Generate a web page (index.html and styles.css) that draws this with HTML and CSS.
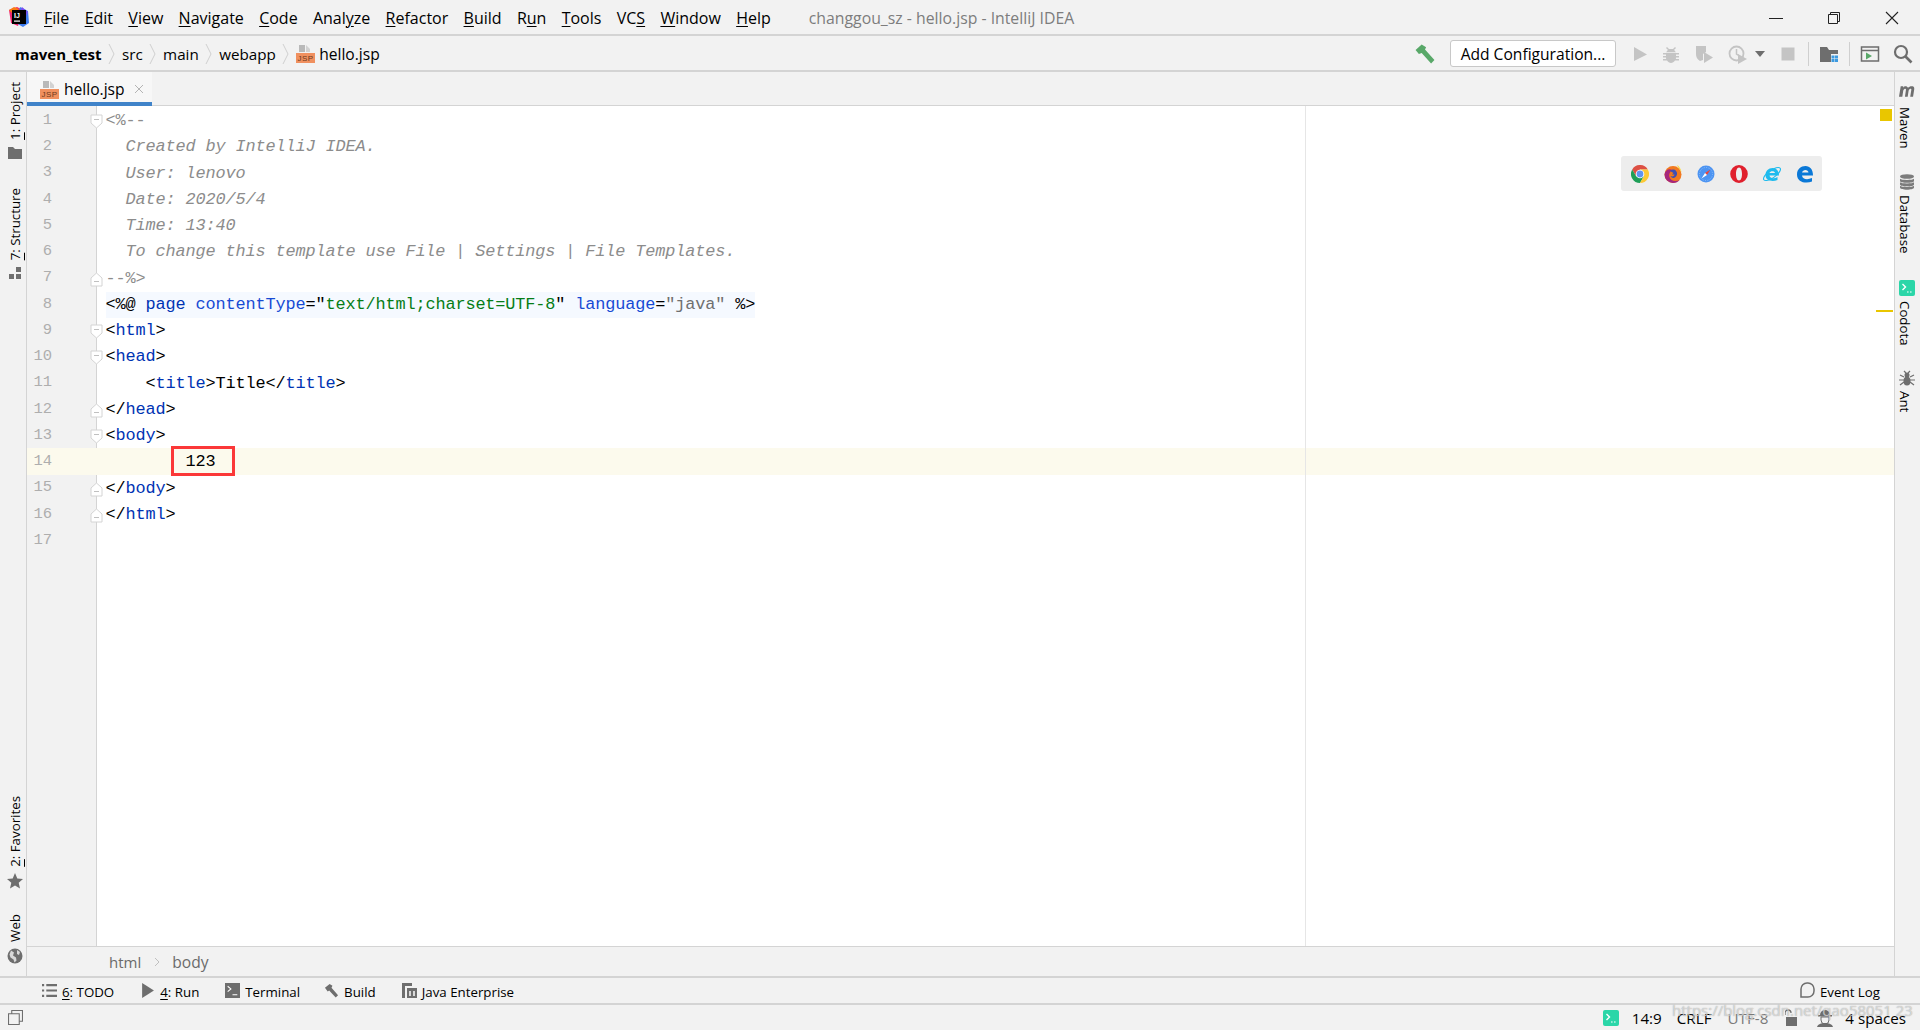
FILE: index.html
```html
<!DOCTYPE html>
<html lang="en">
<head>
<meta charset="utf-8">
<title>changgou_sz - hello.jsp - IntelliJ IDEA</title>
<link rel="stylesheet" href="styles.css">
</head>
<body>
<svg class="defs" width="0" height="0">
  <symbol id="jsp" viewBox="0 0 19 19">
    <path d="M3 1h6v7H3z" fill="#b9b9b9"/><path d="M10 1l4 4v3h-4z" fill="#d2d2d2"/>
    <rect x="0" y="9" width="19" height="10" fill="#f0905f"/>
    <text x="9.5" y="17.2" text-anchor="middle" font-family="Liberation Sans" font-size="8" fill="#6b3a1e" letter-spacing=".5">JSP</text>
  </symbol>
  <symbol id="codota" viewBox="0 0 16 16">
    <rect width="16" height="16" rx="2" fill="#2bd6a8"/>
    <path d="M3.5 4l3 3-3 3" fill="none" stroke="#fff" stroke-width="1.4"/><path d="M8 12h1.6M11 12h1.6" stroke="#fff" stroke-width="1.2"/>
  </symbol>
  <symbol id="fold-open" viewBox="0 0 13 15">
    <path d="M1 1h11v8l-5.5 5L1 9z" fill="#fff" stroke="#d4d4d4"/><path d="M4 5.5h5" stroke="#c0c0c0"/>
  </symbol>
  <symbol id="fold-end" viewBox="0 0 13 15">
    <path d="M1 14h11V6L6.500 1 1 6z" fill="#fff" stroke="#d4d4d4"/><path d="M4 9.500h5" stroke="#c0c0c0"/>
  </symbol>
  <symbol id="crumb" viewBox="0 0 7 20">
    <path d="M1 0l5 10-5 10" fill="none" stroke="#cfcfcf"/>
  </symbol>
</svg>

<header class="titlebar">
  <svg class="logo" viewBox="0 0 22 22">
    <path d="M1 4l8-3 6 3-5 16-7-3z" fill="#f0256e"/><path d="M1 4l5-3 5 2-6 5z" fill="#f97a12"/>
    <path d="M12 1l8 4 1 12-6 4-7-4z" fill="#3d7cf0"/><path d="M14 1l6 5-2 4-6-5z" fill="#7a4ff0"/>
    <rect x="4" y="4" width="14" height="14" fill="#000"/>
    <text x="6" y="11.500" font-family="Liberation Sans" font-weight="700" font-size="7" fill="#fff">IJ</text>
    <rect x="6" y="14.500" width="6" height="1.200" fill="#fff"/>
  </svg>
  <nav class="menu">
    <span><u>F</u>ile</span><span><u>E</u>dit</span><span><u>V</u>iew</span><span><u>N</u>avigate</span><span><u>C</u>ode</span><span>Anal<u>y</u>ze</span><span><u>R</u>efactor</span><span><u>B</u>uild</span><span>R<u>u</u>n</span><span><u>T</u>ools</span><span>VC<u>S</u></span><span><u>W</u>indow</span><span><u>H</u>elp</span>
  </nav>
  <div class="wintitle">changgou_sz - hello.jsp - IntelliJ IDEA</div>
  <div class="winctl">
    <svg viewBox="0 0 18 12" class="wc wc-min"><path d="M1 6.500h14" stroke="#222" stroke-width="1"/></svg>
    <svg viewBox="0 0 14 14" class="wc wc-max"><path d="M1.500 3.500h9v9h-9zM3.500 3.500v-2h9v9h-2" fill="none" stroke="#222"/></svg>
    <svg viewBox="0 0 14 14" class="wc wc-close"><path d="M1 1l12 12M13 1L1 13" stroke="#222" stroke-width="1.100"/></svg>
  </div>
</header>

<div class="navbar">
  <div class="crumbs">
    <b>maven_test</b><svg class="chev"><use href="#crumb"/></svg>
    <span>src</span><svg class="chev"><use href="#crumb"/></svg>
    <span>main</span><svg class="chev"><use href="#crumb"/></svg>
    <span>webapp</span><svg class="chev"><use href="#crumb"/></svg>
    <svg class="jsp-ic"><use href="#jsp"/></svg><span class="crumb-file">hello.jsp</span>
  </div>
  <div class="tools">
    <svg class="ti" viewBox="1 1 18 18"><path d="M1.500 6.500L7 1.500l4 2.500-1 2 8.500 9.500-3 3L7 9 4.500 10z" fill="#59a869"/></svg>
    <button class="addcfg g5">Add Configuration...</button>
    <svg class="ti g4" viewBox="0 0 20 20"><path d="M4 3l13 7.500L4 17z" fill="#c4c4c4"/></svg>
    <svg class="ti g1" viewBox="0 0 20 20"><path d="M6 3l2 2h4l2-2 1 1-2 2c1 .6 1.500 1.300 1.500 2H5.500c0-.7.500-1.400 1.500-2L5 4zM2 9h3.200V8.800h9.600V9H18v1.500h-3V12h3v1.500h-3c0 .5 0 1-.2 1.500H18v1.500h-4C13 18 11.500 19 10 19s-3-1-4-2.500H2V15h3.200c-.2-.5-.2-1-.2-1.500H2V12h3v-1.500H2z" fill="#c4c4c4"/></svg>
    <svg class="ti g3" viewBox="0 0 20 20"><path d="M2 2h10v6l-3 2v6l-3 1c-3-2-4-4-4-7z" fill="#c4c4c4"/><path d="M10 8l9 5.500-9 5.500z" fill="#c4c4c4"/></svg>
    <svg class="ti g4" viewBox="0 0 20 20"><circle cx="8.500" cy="9.500" r="7" fill="none" stroke="#c4c4c4" stroke-width="1.800"/><path d="M8.500 5v5l3 2" fill="none" stroke="#c4c4c4" stroke-width="1.500"/><path d="M10 10l9 5-9 5z" fill="#c4c4c4"/></svg>
    <svg class="caret" viewBox="0 0 10 6"><path d="M0 0h10L5 6z" fill="#6e6e6e"/></svg>
    <svg class="ti g3" viewBox="0 0 20 20"><rect x="3.500" y="3.500" width="13" height="13" fill="#c4c4c4"/></svg>
    <i class="sep"></i>
    <svg class="ti" viewBox="0 0 20 20"><path d="M1 3h7l2 3h9v4h-7v8H1z" fill="#6e6e6e"/><path d="M12.500 11.500h3v3h-3zM16 11.500h3v3h-3zM12.500 15h3v3h-3zM16 15h3v3h-3z" fill="#3c9ae0"/></svg>
    <i class="sep"></i>
    <svg class="ti" viewBox="0 0 20 20"><path d="M1.500 3h17v14h-17zM1.500 6.500h17" fill="none" stroke="#6e6e6e" stroke-width="1.500"/><path d="M6 8.500l6 3.500-6 3.500z" fill="#59a869"/></svg>
    <svg class="ti g3" viewBox="0 0 20 20"><circle cx="8" cy="8" r="6" fill="none" stroke="#6e6e6e" stroke-width="2.200"/><path d="M12.500 12.500l6 6" stroke="#6e6e6e" stroke-width="2.600"/></svg>
  </div>
</div>

<div class="main">
  <aside class="rail rail-left">
    <div class="railgroup">
      <div class="ritem r-project"><span class="vt"><u>1</u>: Project</span>
        <svg class="ri" viewBox="0 0 14 14"><path d="M0 1h5l2 2h7v10H0z" fill="#6e6e6e"/></svg></div>
      <div class="ritem r-structure"><span class="vt"><u>7</u>: Structure</span>
        <svg class="ri" viewBox="0 0 14 14"><path d="M8 1h5v5H8zM1 8h5v5H1zM8 8h5v5H8z" fill="#6e6e6e"/></svg></div>
    </div>
    <div class="railgroup">
      <div class="ritem"><span class="vt"><u>2</u>: Favorites</span>
        <svg class="ri-lg" viewBox="0 0 16 16"><path d="M8 0l2.300 5.500 5.700.5-4.300 3.800 1.300 5.700L8 12.500 3 15.500l1.300-5.700L0 6l5.700-.5z" fill="#6e6e6e"/></svg></div>
      <div class="ritem r-web"><span class="vt">Web</span>
        <svg class="ri-lg" viewBox="0 0 16 16"><circle cx="8" cy="8" r="7.500" fill="#6e6e6e"/><path d="M4 2.500l3 2-1 3 3 2 .500 3-2 2-1-3-3-2-1-3zM10 2l3 2-1 3-2-1z" fill="#d8d8d8"/></svg></div>
    </div>
  </aside>

  <section class="center">
    <div class="tabbar">
      <div class="tab"><svg class="jsp-ic"><use href="#jsp"/></svg><span>hello.jsp</span>
        <svg class="tabx" viewBox="0 0 10 10"><path d="M1 1l8 8M9 1L1 9" stroke="#b4b4b4"/></svg></div>
    </div>
    <div class="editor">
      <div class="line"><span class="num">1</span><svg class="fold"><use href="#fold-open"/></svg><code class="cm">&lt;%--</code></div>
      <div class="line"><span class="num">2</span><code class="cm it">  Created by IntelliJ IDEA.</code></div>
      <div class="line"><span class="num">3</span><code class="cm it">  User: lenovo</code></div>
      <div class="line"><span class="num">4</span><code class="cm it">  Date: 2020/5/4</code></div>
      <div class="line"><span class="num">5</span><code class="cm it">  Time: 13:40</code></div>
      <div class="line"><span class="num">6</span><code class="cm it">  To change this template use File | Settings | File Templates.</code></div>
      <div class="line"><span class="num">7</span><svg class="fold"><use href="#fold-end"/></svg><code class="cm">--%&gt;</code></div>
      <div class="line"><span class="num">8</span><code class="directive">&lt;%@ <span class="tg">page</span> <span class="at">contentType</span>="<span class="st">text/html;charset=UTF-8</span>" <span class="at">language</span>=<span class="gr">"java"</span> %&gt;</code></div>
      <div class="line"><span class="num">9</span><svg class="fold"><use href="#fold-open"/></svg><code>&lt;<span class="tg">html</span>&gt;</code></div>
      <div class="line"><span class="num">10</span><svg class="fold"><use href="#fold-open"/></svg><code>&lt;<span class="tg">head</span>&gt;</code></div>
      <div class="line"><span class="num">11</span><code>    &lt;<span class="tg">title</span>&gt;Title&lt;/<span class="tg">title</span>&gt;</code></div>
      <div class="line"><span class="num">12</span><svg class="fold"><use href="#fold-end"/></svg><code>&lt;/<span class="tg">head</span>&gt;</code></div>
      <div class="line"><span class="num">13</span><svg class="fold"><use href="#fold-open"/></svg><code>&lt;<span class="tg">body</span>&gt;</code></div>
      <div class="line current"><span class="num">14</span><code>        123</code><i class="redbox"></i></div>
      <div class="line"><span class="num">15</span><svg class="fold"><use href="#fold-end"/></svg><code>&lt;/<span class="tg">body</span>&gt;</code></div>
      <div class="line"><span class="num">16</span><svg class="fold"><use href="#fold-end"/></svg><code>&lt;/<span class="tg">html</span>&gt;</code></div>
      <div class="line"><span class="num">17</span><code></code></div>

      <i class="margin"></i>
      <i class="mark-square"></i>
      <i class="mark-line"></i>

      <div class="browsers">
        <svg class="br" viewBox="0 0 18 18"><path d="M1.200 4.500A9 9 0 0 1 16.800 4.500H9L5.100 11.250z" fill="#dd5044"/><path d="M1.200 4.500A9 9 0 0 0 9 18l3.900-6.750H5.100z" fill="#1e9e57"/><path d="M16.800 4.500A9 9 0 0 1 9 18l3.900-6.750L9 4.500z" fill="#fcc934"/><circle cx="9" cy="9" r="4.300" fill="#fff"/><circle cx="9" cy="9" r="3.400" fill="#5f94f0"/></svg>
        <svg class="br" viewBox="0 0 18 18"><circle cx="9" cy="9.500" r="8.500" fill="#f2791f"/><path d="M.5 9.500A8.500 8.500 0 0 0 9 18c3 0 5-1 6.500-3-4 2-9 1-10-3-1-3 1-6 3-7C5 3 1 5 .5 9.500z" fill="#a5267d"/><path d="M13 0c2 1 4 3.500 4.500 7.500C16 4 14 3 13 0z" fill="#fdd835"/><path d="M6 6c2-2 5-2 6 0 2 2 1 5-1 6.500-2 1-4 0-4.500-1.500 2 1 4 0 4-1.500H8L9.500 8z" fill="#3f4fb5"/></svg>
        <svg class="br" viewBox="0 0 18 18"><circle cx="9" cy="9" r="8.500" fill="#4d94f2"/><circle cx="9" cy="9" r="6.500" fill="none" stroke="#8cc0fa" stroke-width="1" stroke-dasharray="1 1.500"/><path d="M13.500 4.500L8 8l2 2z" fill="#f04438"/><path d="M4.500 13.500L10 10 8 8z" fill="#fff"/></svg>
        <svg class="br" viewBox="0 0 18 18"><path d="M9 0a8.800 9 0 1 0 .01 18A8.800 9 0 0 0 9 0zm0 2.500c1.900 0 3 2.900 3 6.500s-1.100 6.500-3 6.500S6 12.600 6 9s1.100-6.500 3-6.500z" fill="#e0202d" fill-rule="evenodd"/></svg>
        <svg class="br" viewBox="0 0 18 18"><path d="M2.500 10C2.500 6 5.500 3 9.500 3s6.500 3 6.500 7.500H6.500c.5 3 4.500 3.500 8 1.500v3c-5 2-12 1-12-5zM6.500 8H12c-.3-2.500-5-2.500-5.500 0z" fill="#1ebbee" fill-rule="evenodd"/><ellipse cx="9" cy="9" rx="10" ry="3.800" transform="rotate(-35 9 9)" fill="none" stroke="#1ebbee" stroke-width="1.100"/></svg>
        <svg class="br" viewBox="0 0 18 18"><path d="M1 9.500C1 4 5 1 9.500 1S17 4.500 17 10.500H6c.5 4 5.500 4.500 10 2.500v3.500c-6 2.500-15 1-15-7zM6 7.500h6.500C12.300 4 6.700 4 6 7.500z" fill="#0a78d7" fill-rule="evenodd"/></svg>
      </div>
    </div>
    <div class="crumbbar"><span>html</span><svg class="tiny" viewBox="0 0 6 10"><path d="M1 1l4 4-4 4" fill="none" stroke="#c0c0c0"/></svg><span class="cb-body">body</span></div>
  </section>

  <aside class="rail rail-right">
    <div class="ritem-r r-maven"><svg class="m-ic" viewBox="1 2 14 11"><path d="M1 12l1.500-9h2.200l-.2 1.200C5.500 3 7 2.600 8 3.300c.5.300.7.700.8 1C10 3 11.500 2.500 13 3c1.300.5 1.500 1.600 1.300 2.800L13.300 12h-2.500l1-6c.1-.8-.7-1-1.300-.7-.6.300-1 .8-1.100 1.500L8.600 12H6.200l.9-6c.1-.8-.7-1-1.300-.7-.6.300-1 .8-1.100 1.500L3.900 12z" fill="#6e6e6e"/></svg><span class="vr">Maven</span></div>
    <div class="ritem-r r-db"><svg class="ri-lg" viewBox="0 0 16 16"><ellipse cx="8" cy="2.500" rx="7" ry="2.300" fill="#7c7c7c"/><path d="M1 4.700c1.500 1.600 12.500 1.600 14 0v2.200c0 2.500-14 2.500-14 0zM1 8.200c1.500 1.600 12.500 1.600 14 0v2.200c0 2.500-14 2.500-14 0zM1 11.700c1.500 1.600 12.500 1.600 14 0v1.800c0 2.900-14 2.900-14 0z" fill="#7c7c7c"/></svg><span class="vr">Database</span></div>
    <div class="ritem-r r-cod"><svg class="ri-lg"><use href="#codota"/></svg><span class="vr">Codota</span></div>
    <div class="ritem-r r-ant"><svg class="ri-lg" viewBox="0 0 16 16"><ellipse cx="8" cy="5" rx="2.500" ry="2.500" fill="#6e6e6e"/><ellipse cx="8" cy="11" rx="3.500" ry="4.500" fill="#6e6e6e"/><path d="M5 1l2 2M11 1L9 3M1 5l4 2M15 5l-4 2M0 10h5M16 10h-5M1 15l4-3M15 15l-4-3" stroke="#6e6e6e" stroke-width="1.200"/></svg><span class="vr">Ant</span></div>
  </aside>
</div>

<div class="toolbar">
  <div class="tw tw-todo"><svg class="twi" viewBox="0 0 14 12"><path d="M0 0h2v2H0zM4 0h10v2H4zM0 5h2v2H0zM4 5h10v2H4zM0 10h2v2H0zM4 10h10v2H4z" fill="#6e6e6e"/></svg><span><u>6</u>: TODO</span></div>
  <div class="tw tw-run"><svg class="twi" viewBox="0 0 14 14"><path d="M2 0l11 7-11 7z" fill="#6e6e6e"/></svg><span><u>4</u>: Run</span></div>
  <div class="tw tw-term"><svg class="twi" viewBox="0 0 14 14"><rect width="14" height="14" fill="#6e6e6e"/><path d="M2.500 3l3 2.500-3 2.500M7 11h4.500" fill="none" stroke="#fff"/></svg><span>Terminal</span></div>
  <div class="tw tw-build"><svg class="twi" viewBox="0 0 16 16"><path d="M1 5l5-4 3 2-1 2 7 8-2.500 2.500L5.500 8 4 9z" fill="#6e6e6e"/></svg><span>Build</span></div>
  <div class="tw tw-java"><svg class="twi" viewBox="0 0 15 15"><path d="M0 0h10v3H3v12H0z" fill="#6e6e6e"/><rect x="5" y="5" width="10" height="10" fill="#6e6e6e"/><path d="M7 8h2v5H7zM11 8h2v5h-2z" fill="#d8d8d8"/></svg><span>Java Enterprise</span></div>
  <div class="tw tw-log"><svg class="twi-lg" viewBox="0 0 16 16"><path d="M2 15V7a6 6 0 0 1 6-6h1a6 6 0 0 1 6 6v2a6 6 0 0 1-6 6z" fill="none" stroke="#6e6e6e" stroke-width="1.500"/></svg><span>Event Log</span></div>
</div>

<footer class="status">
  <svg class="st-left" viewBox="0 0 14 14"><path d="M.5 3.500h10v10H.5zM3.500 3.500V.5h10v10h-3" fill="none" stroke="#6e6e6e"/></svg>
  <div class="st-right">
    <svg class="ri-lg"><use href="#codota"/></svg>
    <span class="s-pos">14:9</span>
    <span>CRLF</span>
    <span class="s-enc">UTF-8</span>
    <svg class="s-lock" viewBox="0 0 12 18"><path d="M1 6V4a3 3 0 0 1 6 0" fill="none" stroke="#6e6e6e" stroke-width="1.300" transform="translate(-1 0)"/><rect x="1" y="8" width="11" height="9" fill="#6e6e6e"/></svg>
    <svg class="s-hector" viewBox="0 0 18 18"><path d="M4 6a5 5 0 0 1 10 0z" fill="#6e6e6e"/><path d="M2 6h14v1.500H2z" fill="#6e6e6e"/><path d="M5 8h8v3a4 4 0 0 1-8 0z" fill="none" stroke="#6e6e6e"/><path d="M1 18c1-3 4-4 8-4s7 1 8 4z" fill="#6e6e6e"/></svg>
    <span class="s-indent">4 spaces</span>
  </div>
  <div class="watermark">https://blog.csdn.net/qao58051 23</div>
</footer>
</body>
</html>
```
FILE: styles.css
```css
* { box-sizing: border-box; }
html, body { margin: 0; height: 100%; }
body {
  width: 1920px; height: 1030px; overflow: hidden;
  display: flex; flex-direction: column;
  background: #f2f2f2; color: #000;
  font-family: "Open Sans", "Liberation Sans", sans-serif;
}
.defs { position: absolute; }
u { text-underline-offset: 2px; text-decoration-thickness: 1px; }

/* Title bar */
.titlebar { height: 36px; flex: none; display: flex; align-items: center; border-bottom: 2px solid #d4d4d4; padding: 1px 0 0 8px; position: relative; }
.logo { width: 22px; height: 22px; flex: none; margin-top: -1px; }
.menu { display: flex; gap: 15.300px; margin-left: 14px; font-size: 16px; }
.wintitle { margin-left: 38px; font-size: 15.800px; color: #7d7d7d; }
.winctl { margin-left: auto; display: flex; align-items: center; padding-right: 21px; }
.wc-min { width: 18px; height: 12px; }
.wc-max { width: 14px; height: 14px; margin-left: 41px; }
.wc-close { width: 14px; height: 14px; margin-left: 44px; }

/* Navigation bar */
.navbar { height: 36px; flex: none; display: flex; align-items: center; justify-content: space-between; border-bottom: 2px solid #d4d4d4; padding: 1px 7px 0 15px; }
.crumbs { display: flex; align-items: center; font-size: 15.200px; }
.crumbs b { font-weight: 700; font-size: 15px; }
.chev { width: 7px; height: 20px; margin: 0 7.400px 0 6px; flex: none; }
.jsp-ic { width: 19px; height: 19px; flex: none; }
.crumb-file { margin-left: 4px; font-size: 15.600px; }
.tools { display: flex; align-items: center; gap: 10px; }
.ti { width: 20px; height: 20px; flex: none; }
.g1 { margin-left: 1px; }
.g3 { margin-left: 3px; }
.g4 { margin-left: 4px; }
.g5 { margin-left: 5px; }
.caret { width: 10px; height: 6px; margin-left: -3px; flex: none; }
.sep { width: 1px; height: 24px; background: #cfcfcf; flex: none; }
.addcfg { width: 166px; height: 27px; background: #fff; border: 1px solid #c8c8c8; border-radius: 3px; font: 15.600px "Open Sans", sans-serif; color: #000; padding: 1px 0 0; }

/* Main */
.main { flex: 1; display: flex; min-height: 0; }
.rail { width: 27px; flex: none; display: flex; flex-direction: column; }
.rail-left { justify-content: space-between; border-right: 1px solid #d4d4d4; padding: 10px 0 12px 3px; }
.rail-right { width: 26px; border-left: 1px solid #d4d4d4; padding: 13px 2px 0 0; }
.railgroup { display: flex; flex-direction: column; align-items: center; }
.ritem { display: flex; flex-direction: column; align-items: center; gap: 6px; }
.r-structure { margin-top: 28px; }
.r-web { margin-top: 25px; }
.vt { writing-mode: vertical-rl; transform: rotate(180deg); font-size: 13.300px; line-height: 16px; }
.vr { writing-mode: vertical-rl; font-size: 13.300px; line-height: 16px; margin-right: 4px; }
.ri { width: 14px; height: 14px; }
.ri-lg { width: 16px; height: 16px; flex: none; }
.ritem-r { display: flex; flex-direction: column; align-items: center; gap: 5px; }
.m-ic { width: 16px; height: 13px; }
.r-maven { gap: 9px; }
.r-db { margin-top: 25px; }
.r-cod { margin-top: 27px; }
.r-ant { margin-top: 24px; }

.center { flex: 1; min-width: 0; display: flex; flex-direction: column; }
.tabbar { height: 34px; flex: none; border-bottom: 1px solid #d4d4d4; }
.tab { width: 125px; height: 34px; display: flex; align-items: center; padding: 4px 0 0 13px; border-bottom: 4px solid #4083c9; background: #f7f7f7; font-size: 15.600px; }
.tab span { margin-left: 5px; }
.tabx { width: 10px; height: 10px; margin-left: 9px; }

/* Editor */
.editor { flex: 1; position: relative; background: #fff; padding-top: 1px;
  background-image: linear-gradient(#f2f2f2, #f2f2f2); background-size: 69px 100%; background-repeat: no-repeat; }
.editor::before { content: ""; position: absolute; top: 0; bottom: 0; left: 69px; width: 1px; background: #d4d4d4; }
.line { height: 26.250px; display: flex; align-items: center; position: relative; }
.line.current { background: #fcfaed; }
.num { width: 25px; text-align: right; flex: none; font: 15.500px/1 "Liberation Mono", monospace; color: #aeaeae; padding-top: 1px; }
.fold { position: absolute; left: 62.500px; top: 7px; width: 13px; height: 15px; z-index: 1; }
code { position: absolute; left: 78.500px; top: 1px; font: 16.900px/26px "Liberation Mono", monospace; letter-spacing: -.14px; white-space: pre; color: #000; }
.cm { color: #8c8c8c; }
.it { font-style: italic; }
.tg { color: #0033b3; }
.at { color: #174ad4; }
.st { color: #067d17; }
.gr { color: #6f6f6f; }
.directive { background: #f5f9ff; }
.redbox { position: absolute; left: 144px; top: -2px; width: 64px; height: 30px; border: 3px solid #fb3838; }
.margin { position: absolute; top: 0; bottom: 0; left: 1278px; width: 1px; background: #e6e6e6; }
.mark-square { position: absolute; top: 3px; right: 2px; width: 12px; height: 12px; background: #e9c600; }
.mark-line { position: absolute; top: 204px; right: 1px; width: 17px; height: 2px; background: #e9c600; }
.browsers { position: absolute; top: 50px; left: 1594px; width: 201px; height: 35px; display: flex; align-items: center; gap: 15px; padding-left: 10px; background: #ededed; border-radius: 3px; }
.br { width: 18px; height: 18px; flex: none; }

.crumbbar { height: 30px; flex: none; display: flex; align-items: center; border-top: 1px solid #d4d4d4; padding-left: 82px; font-size: 15px; color: #6b6b6b; }
.tiny { width: 6px; height: 10px; margin: 0 12px 0 13px; }
.cb-body { font-size: 15.600px; }

/* Tool window bar */
.toolbar { height: 29px; flex: none; display: flex; align-items: center; border-top: 2px solid #d4d4d4; border-bottom: 2px solid #d4d4d4; padding-left: 42px; font-size: 13.300px; }
.tw { display: flex; align-items: center; gap: 5px; padding-top: 2px; }
.twi { width: 15px; height: 15px; flex: none; margin-top: -3px; }
.twi-lg { width: 16px; height: 16px; flex: none; margin-top: -3px; }
.tw-run { margin-left: 26px; }
.tw-term { margin-left: 26px; }
.tw-build { margin-left: 24px; }
.tw-java { margin-left: 26px; }
.tw-log { margin-left: auto; padding-right: 40px; }

/* Status bar */
.status { height: 25px; flex: none; display: flex; align-items: center; justify-content: space-between; padding: 0 14px 0 8px; font-size: 15.200px; position: relative; }
.st-left { width: 15px; height: 15px; }
.st-right { display: flex; align-items: center; }
.s-pos { margin: 0 15px 0 13px; }
.s-enc { color: #7a7a7a; margin-left: 16px; }
.s-lock { width: 12px; height: 18px; margin-left: 17px; }
.s-hector { width: 18px; height: 18px; margin-left: 19px; }
.s-indent { margin-left: 11px; }
.watermark { position: absolute; left: 1672px; top: -6px; font-size: 15px; line-height: 22px; color: rgba(255,255,255,.55); text-shadow: 0 0 1px rgba(120,120,120,.8); white-space: nowrap; }
```
